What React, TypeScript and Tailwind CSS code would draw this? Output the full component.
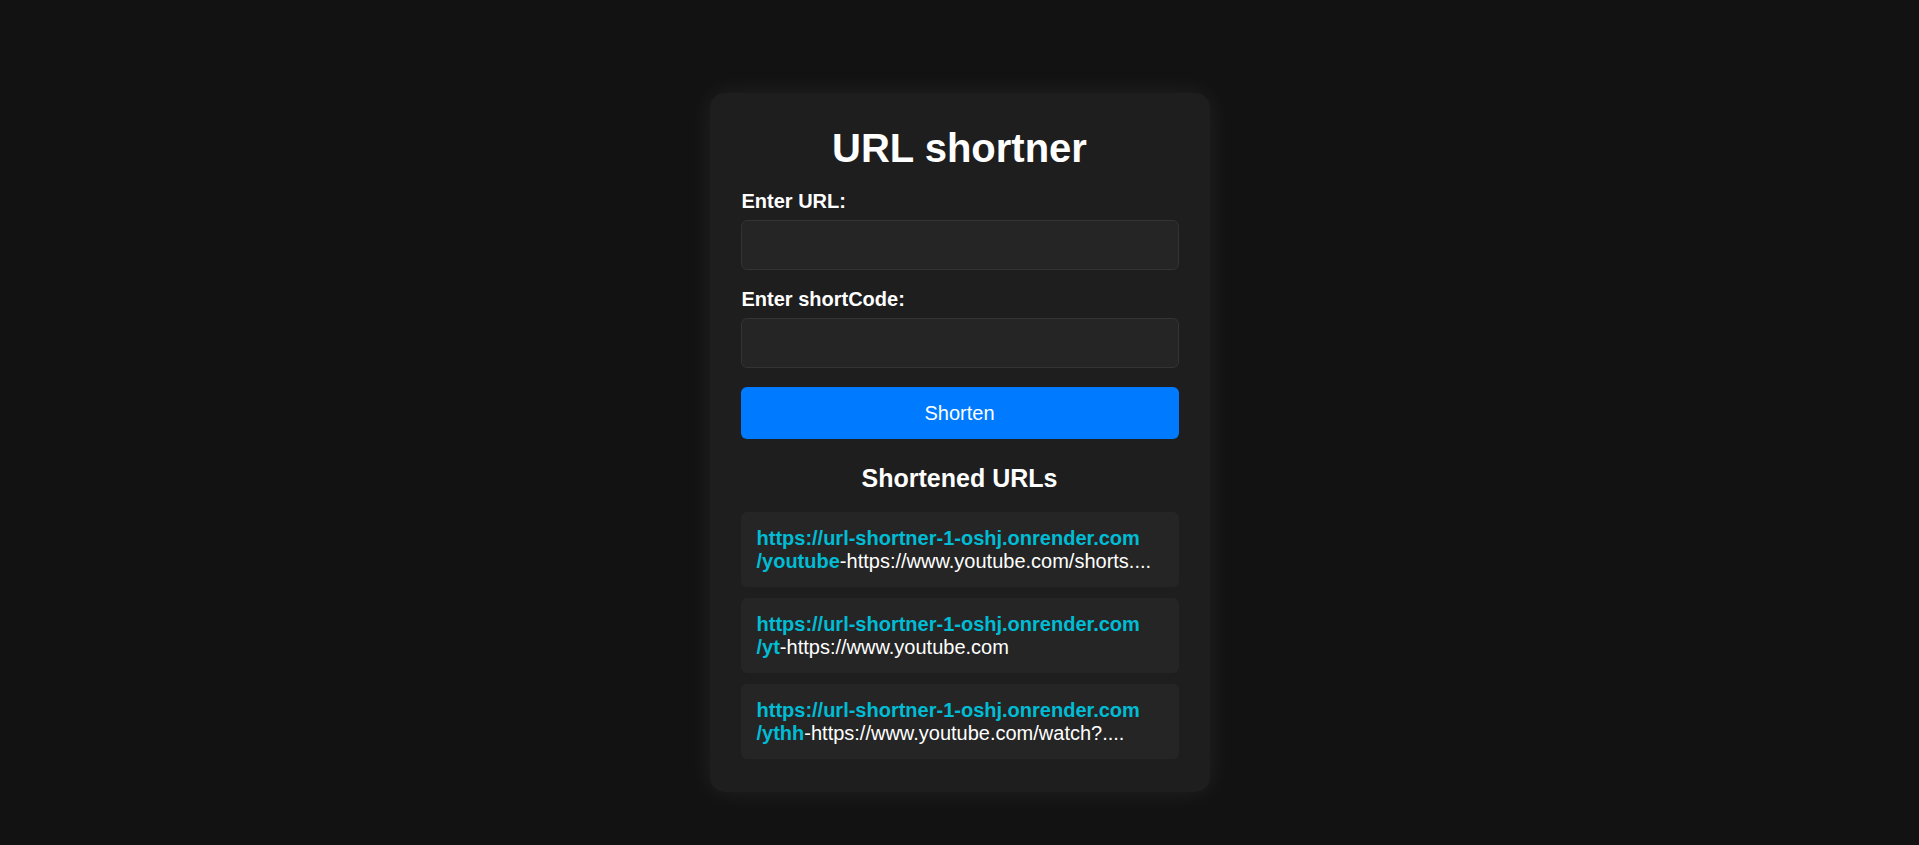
import { useState } from "react";

const BASE_URL = "https://url-shortner-1-oshj.onrender.com";

const initialLinks = [
  { code: "youtube", target: "https://www.youtube.com/shorts...." },
  { code: "yt", target: "https://www.youtube.com" },
  { code: "ythh", target: "https://www.youtube.com/watch?...." },
];

export default function App() {
  const [url, setUrl] = useState("");
  const [shortCode, setShortCode] = useState("");
  const [links] = useState(initialLinks);

  const handleSubmit = (e: React.FormEvent) => {
    e.preventDefault();
  };

  return (
    <div className="min-h-screen bg-[#121212] flex justify-center pt-[93px] font-['Liberation_Sans',Arial,sans-serif] text-white">
      <div className="w-[500px] self-start rounded-[15px] bg-[#1e1e1e] px-[31px] pt-[32px] pb-[33px] shadow-[0_0_26px_rgba(255,255,255,0.07)]">
        <h1 className="text-center text-[40px] font-bold leading-[46px] mb-[19px]">URL shortner</h1>

        <form onSubmit={handleSubmit} className="flex flex-col">
          <label className="block text-[20px] font-bold leading-[23px] mb-[7px] pl-px">Enter URL:</label>
          <input
            type="text"
            value={url}
            onChange={(e) => setUrl(e.target.value)}
            className="h-[50px] w-full rounded-[6px] border border-[#333333] bg-[#252525] px-[12px] text-[20px] text-white outline-none mb-[18px]"
          />

          <label className="block text-[20px] font-bold leading-[23px] mb-[7px] pl-px">Enter shortCode:</label>
          <input
            type="text"
            value={shortCode}
            onChange={(e) => setShortCode(e.target.value)}
            className="h-[50px] w-full rounded-[6px] border border-[#333333] bg-[#252525] px-[12px] text-[20px] text-white outline-none mb-[19px]"
          />

          <button
            type="submit"
            className="h-[52px] w-full rounded-[6px] bg-[#007bff] text-[20px] leading-[23px] text-white"
          >
            Shorten
          </button>
        </form>

        <h2 className="text-center text-[25px] font-bold leading-[29px] mt-[25px] mb-[19px]">Shortened URLs</h2>

        <ul className="flex flex-col gap-[11px]">
          {links.map((l) => (
            <li key={l.code} className="rounded-[6px] bg-[#252525] px-[16px] py-[14.5px] text-[20px] leading-[23px]">
              <a href={`${BASE_URL}/${l.code}`} className="font-bold text-[#00bcd4]">
                {BASE_URL}
                <br />/{l.code}
              </a>
              <span>-{l.target}</span>
            </li>
          ))}
        </ul>
      </div>
    </div>
  );
}
